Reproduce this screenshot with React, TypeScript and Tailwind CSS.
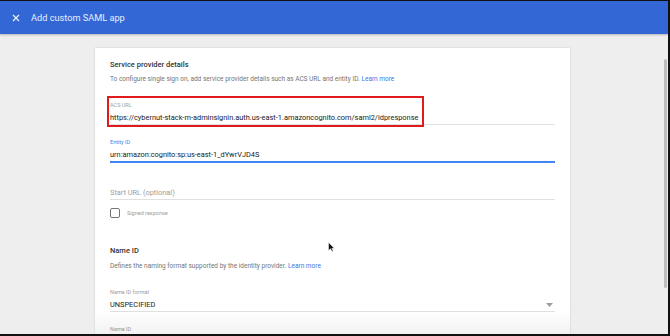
import React from 'react';

const font = { fontFamily: 'Roboto, "Noto Sans", sans-serif' };

const Field: React.FC<{ label: string; value?: string; placeholder?: string; active?: boolean }> = ({
    label,
    value,
    active,
}) => (
    <div className={`border-b ${active ? 'border-b-2 border-[#4285f4]' : 'border-[#e0e0e0]'}`}>
        <div className={`text-[5.5px] leading-[10px] ${active ? 'text-[#4285f4]' : 'text-[#9e9e9e]'}`}>{label}</div>
        <div className="mt-[2px] text-[7.4px] leading-[12px] text-[#212121]">{value}</div>
    </div>
);

const App: React.FC = () => {
    return (
        <div
            style={font}
            className="relative w-[670px] h-[336px] overflow-hidden bg-[#eeeeee] border-t border-r-2 border-b-2 border-[#111]"
        >
            <header className="h-[33px] bg-[#3367d6] flex items-center shadow-[0_1px_2px_rgba(0,0,0,0.25)]">
                <svg width="8" height="8" viewBox="0 0 8 8" className="ml-[12px]">
                    <path d="M1 1L7 7M7 1L1 7" stroke="#e8eefb" strokeWidth="1.3" />
                </svg>
                <h1 className="ml-[11px] text-[9.2px] text-[#e8eefb]">Add custom SAML app</h1>
            </header>

            <div className="ml-[95px] mt-[14px] w-[475px] h-[300px] bg-white shadow-[0_0_2px_rgba(0,0,0,0.15)] pl-[15px] pr-[15px] pt-[11px]">
                <h2 className="text-[7.5px] leading-[12px] font-medium text-[#333]">Service provider details</h2>
                <p className="mt-[4px] text-[6.5px] leading-[8px] text-[#757575]">
                    To configure single sign on, add service provider details such as ACS URL and entity ID.{' '}
                    <span className="text-[#3b78e7]">Learn more</span>
                </p>

                <div className="relative mt-[17px]">
                    <Field label="ACS URL" value="https://cybernut-stack-m-adminsignin.auth.us-east-1.amazoncognito.com/saml2/idpresponse" />
                    <div className="absolute left-[-3px] top-[-4px] w-[317px] h-[31px] border-2 border-[#e01b1b]" />
                </div>

                <div className="mt-[12px]">
                    <Field label="Entity ID" value="urn:amazon:cognito:sp:us-east-1_dYwrVJD4S" active />
                </div>

                <div className="mt-[24px] border-b border-[#e0e0e0] text-[7.4px] leading-[12px] text-[#9e9e9e]">
                    Start URL (optional)
                </div>

                <div className="mt-[8px] flex items-center gap-[7px]">
                    <div className="w-[10px] h-[10px] rounded-[2px] border-[1.5px] border-[#757575]" />
                    <span className="text-[5.5px] text-[#9e9e9e]">Signed response</span>
                </div>

                <h2 className="mt-[27px] text-[7.5px] leading-[12px] font-medium text-[#333]">Name ID</h2>
                <p className="mt-[5px] text-[6.5px] leading-[8px] text-[#757575]">
                    Defines the naming format supported by the identity provider.{' '}
                    <span className="text-[#3b78e7]">Learn more</span>
                </p>

                <div className="mt-[18px] text-[5.5px] leading-[8px] text-[#9e9e9e]">Name ID format</div>
                <div className="mt-[3px] flex items-center justify-between border-b border-[#e0e0e0]">
                    <span className="text-[7.4px] leading-[12px] text-[#212121]">UNSPECIFIED</span>
                    <svg width="7" height="4" viewBox="0 0 7 4" className="mr-[2px]">
                        <path d="M0 0H7L3.5 4Z" fill="#9e9e9e" />
                    </svg>
                </div>
                <div className="mt-[13px] text-[5.5px] leading-[8px] text-[#9e9e9e]">Name ID</div>
            </div>

            <div className="absolute left-[95px] bottom-0 w-[475px] h-[24px] bg-gradient-to-b from-transparent to-[rgba(0,0,0,0.05)]" />

            <div className="absolute left-[664px] top-[58px] w-[3px] h-[229px] rounded-full bg-[#bdbdbd]" />

            <svg width="7" height="10" viewBox="0 0 7 10" className="absolute left-[328px] top-[241px]">
                <path d="M0.5 0.5V8.5L2.5 6.8L4 9.5L5.2 8.9L3.8 6.3H6.3Z" fill="#111" stroke="#fff" strokeWidth="0.5" />
            </svg>
        </div>
    );
};

export default App;
